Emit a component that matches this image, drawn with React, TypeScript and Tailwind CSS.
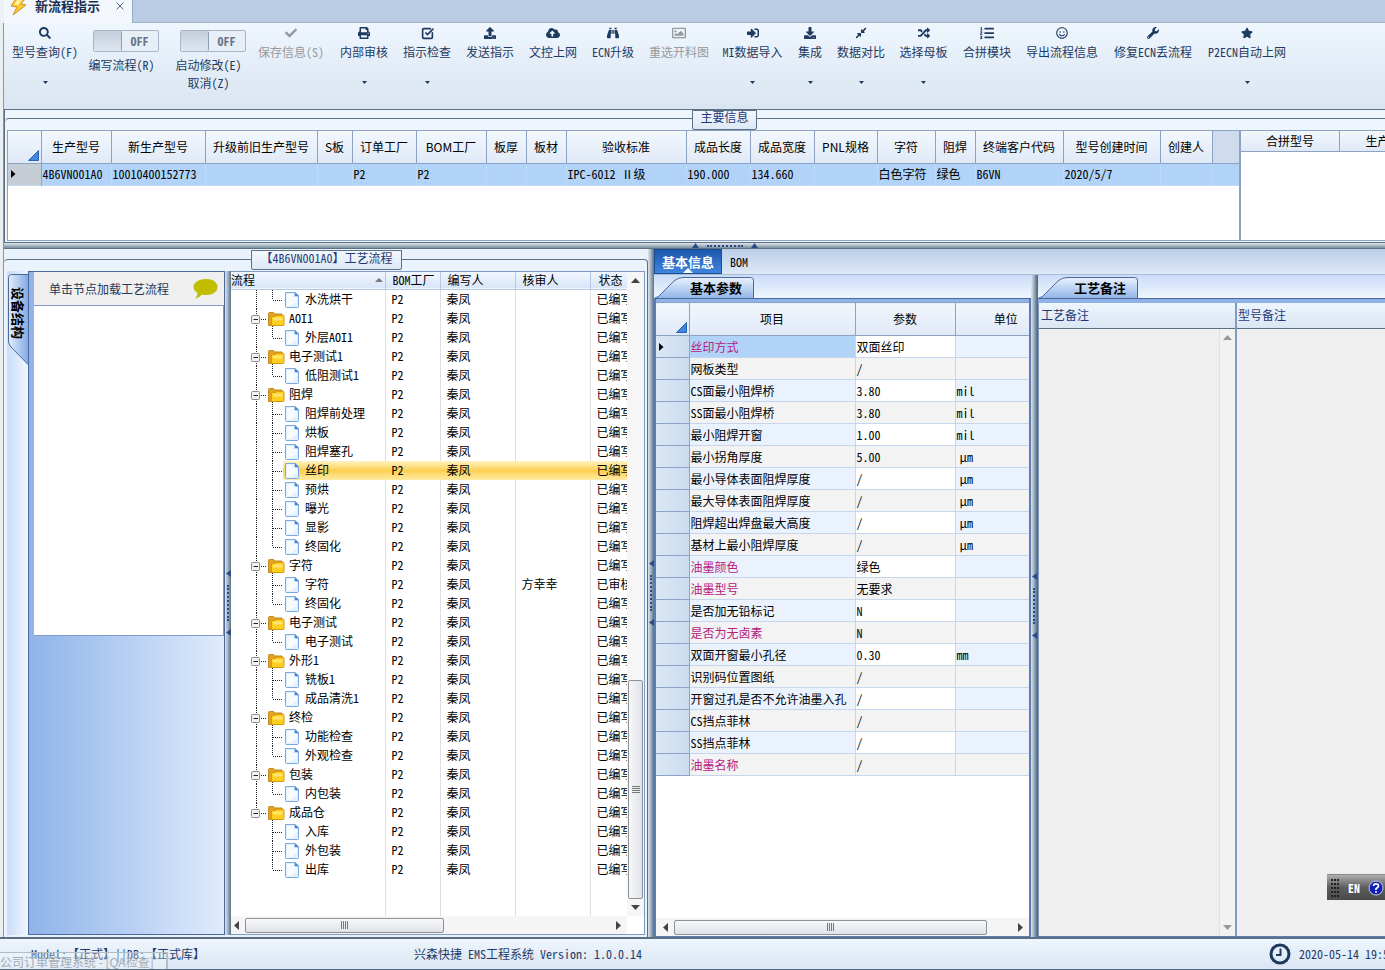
import React from "react";
import {
  FaSearch, FaCheck, FaPrint, FaUpload, FaCloudUploadAlt, FaBinoculars, FaRegImage, FaSignInAlt,
  FaDownload, FaCompressAlt, FaRandom, FaListOl, FaRegSmile, FaWrench, FaStar,
} from "react-icons/fa";
import { SquareCheckBig } from "lucide-react";

type RibbonItem = { label: string; w: string; icon: React.ReactNode; menu?: boolean; disabled?: boolean };

const ribbon: RibbonItem[] = [
  { label: "保存信息(S)", w: "w-[82px]", icon: <FaCheck />, disabled: true },
  { label: "内部审核", w: "w-[64px]", icon: <FaPrint />, menu: true },
  { label: "指示检查", w: "w-[62px]", icon: <SquareCheckBig size={13} strokeWidth={3} />, menu: true },
  { label: "发送指示", w: "w-[64px]", icon: <FaUpload /> },
  { label: "文控上网", w: "w-[62px]", icon: <FaCloudUploadAlt size={14} /> },
  { label: "ECN升级", w: "w-[58px]", icon: <FaBinoculars /> },
  { label: "重选开料图", w: "w-[74px]", icon: <FaRegImage size={14} />, disabled: true },
  { label: "MI数据导入", w: "w-[73px]", icon: <FaSignInAlt />, menu: true },
  { label: "集成", w: "w-[42px]", icon: <FaDownload />, menu: true },
  { label: "数据对比", w: "w-[60px]", icon: <FaCompressAlt size={12} />, menu: true },
  { label: "选择母板", w: "w-[65px]", icon: <FaRandom />, menu: true },
  { label: "合拼模块", w: "w-[62px]", icon: <FaListOl size={14} /> },
  { label: "导出流程信息", w: "w-[88px]", icon: <FaRegSmile /> },
  { label: "修复ECN丢流程", w: "w-[94px]", icon: <FaWrench /> },
  { label: "P2ECN自动上网", w: "w-[94px]", icon: <FaStar />, menu: true },
];

function Caret() {
  return <svg width="5" height="3" className="mt-[21px] fill-[#1f3a5f]"><path d="M0 0h5L2.5 3z" /></svg>;
}

function RibbonButton({ item }: { item: RibbonItem }) {
  return (
    <button type="button" disabled={item.disabled}
      className={`${item.w} flex shrink-0 flex-col items-center whitespace-nowrap pt-[3px] ${item.disabled ? "text-[#98999b]" : "text-[#1f3a5f]"}`}>
      <span className="flex h-[14px] items-center text-[12px]">{item.icon}</span>
      <span className="mt-1 h-4 leading-4">{item.label}</span>
      {item.menu && <Caret />}
    </button>
  );
}

function Switch({ label, extra, w }: { label: string; extra?: string; w: string }) {
  return (
    <div className={`${w} flex shrink-0 flex-col items-center whitespace-nowrap text-[#1f3a5f]`}>
      <button type="button" role="switch" aria-checked="false" aria-label={label}
        className="mt-[7px] ml-2 flex h-[22px] w-[66px] items-stretch rounded-[2px] border border-[#a9b5c6] bg-[#e8eef6]">
        <span className="w-[28px] rounded-[2px] border-r border-[#8f9db2] bg-linear-to-b from-[#c3cddb] to-[#dfe6ef]" />
        <span className="flex-1 text-center text-[12px] leading-5 font-bold text-[#68778b]">OFF</span>
      </button>
      <span className="mt-1 leading-[18px]">{label}</span>
      {extra && <span className="leading-[18px]">{extra}</span>}
    </div>
  );
}

const mainCols: [string, string, string][] = [
  ["生产型号", "4B6VN001A0", "w-[70px]"],
  ["新生产型号", "10010400152773", "w-[94px]"],
  ["升级前旧生产型号", "", "w-[112px]"],
  ["S板", "", "w-[35px]"],
  ["订单工厂", "P2", "w-[64px]"],
  ["BOM工厂", "P2", "w-[70px]"],
  ["板厚", "", "w-[40px]"],
  ["板材", "", "w-[40px]"],
  ["验收标准", "IPC-6012 Ⅱ级", "w-[120px]"],
  ["成品长度", "190.000", "w-[64px]"],
  ["成品宽度", "134.660", "w-[64px]"],
  ["PNL规格", "", "w-[63px]"],
  ["字符", "白色字符", "w-[58px]"],
  ["阻焊", "绿色", "w-[40px]"],
  ["终端客户代码", "B6VN", "w-[88px]"],
  ["型号创建时间", "2020/5/7", "w-[97px]"],
  ["创建人", "", "w-[52px]"],
];

type Node = { t: string; folder?: boolean; last?: boolean; reviewer?: string; sel?: boolean };
const nodes: Node[] = [
  { t: "水洗烘干", last: true },
  { t: "AOI1", folder: true }, { t: "外层AOI1", last: true },
  { t: "电子测试1", folder: true }, { t: "低阻测试1", last: true },
  { t: "阻焊", folder: true }, { t: "阻焊前处理" }, { t: "烘板" }, { t: "阻焊塞孔" }, { t: "丝印", sel: true },
  { t: "预烘" }, { t: "曝光" }, { t: "显影" }, { t: "终固化", last: true },
  { t: "字符", folder: true }, { t: "字符", reviewer: "方幸幸" }, { t: "终固化", last: true },
  { t: "电子测试", folder: true }, { t: "电子测试", last: true },
  { t: "外形1", folder: true }, { t: "铣板1" }, { t: "成品清洗1", last: true },
  { t: "终检", folder: true }, { t: "功能检查" }, { t: "外观检查", last: true },
  { t: "包装", folder: true }, { t: "内包装", last: true },
  { t: "成品仓", folder: true }, { t: "入库" }, { t: "外包装" }, { t: "出库", last: true },
];
const lastRoot = 27;

const dots = { stroke: "#222", strokeDasharray: "1 1", fill: "none" };

function FolderRow({ end }: { end: boolean }) {
  return (
    <svg width="54" height="19" className="shrink-0">
      <path d={end ? "M25.5 0V9" : "M25.5 0V19"} {...dots} />
      <path d="M30 10.5H35" {...dots} />
      <path d="M41.5 17V19" {...dots} />
      <rect x="20.5" y="6.5" width="8" height="8" rx="1" fill="#f2f2f2" stroke="#8b8b8b" />
      <path d="M22.5 10.5h4.500" stroke="#222" />
      <path d="M37.500 16.500V4.500q0-1 1-1h4l1 1.500h7.500v11.500z" fill="#e0a422" stroke="#c48a1c" />
      <path d="M40.500 16.500V8.500q0-1 1-1h3l1-1.200h6.500q1 0 1 1v8.200q0 1-1 1z" fill="#ffcf1f" stroke="#d99a10" />
      <path d="M42 8.500h9.500v3H42z" fill="#ffe98a" opacity=".8" />
    </svg>
  );
}

function LeafLines({ root, last }: { root: boolean; last: boolean }) {
  return (
    <svg width="52" height="19" className="shrink-0">
      {root && <path d="M25.5 0V19" {...dots} />}
      <path d={last ? "M41.5 0V10" : "M41.5 0V19"} {...dots} />
      <path d="M42 10.5H51" {...dots} />
    </svg>
  );
}

function DocIcon() {
  return (
    <svg width="16" height="19" className="shrink-0">
      <path d="M2.500 2.500H12L15.500 6V16.500q0 1-1 1H3.500q-1 0-1-1z" fill="#e4f1ff" stroke="#7ba9e4" />
      <path d="M4 4h6v3h4v4L8 16H4z" fill="#f6fbff" />
      <path d="M12 2.500V6H15.500z" fill="#3f82d6" stroke="#3f82d6" strokeWidth=".5" />
    </svg>
  );
}

const params: [string, string, string, boolean?][] = [
  ["丝印方式", "双面丝印", "", true], ["网板类型", "/", ""], ["CS面最小阻焊桥", "3.80", "mil"], ["SS面最小阻焊桥", "3.80", "mil"],
  ["最小阻焊开窗", "1.00", "mil"], ["最小拐角厚度", "5.00", "μm"], ["最小导体表面阻焊厚度", "/", "μm"],
  ["最大导体表面阻焊厚度", "/", "μm"], ["阻焊超出焊盘最大高度", "/", "μm"], ["基材上最小阻焊厚度", "/", "μm"],
  ["油墨颜色", "绿色", "", true], ["油墨型号", "无要求", "", true], ["是否加无铅标记", "N", ""], ["是否为无卤素", "N", "", true],
  ["双面开窗最小孔径", "0.30", "mm"], ["识别码位置图纸", "/", ""], ["开窗过孔是否不允许油墨入孔", "/", ""],
  ["CS挡点菲林", "/", ""], ["SS挡点菲林", "/", ""], ["油墨名称", "/", "", true],
];

function Corner() {
  return <svg width="11" height="11" className="mr-[2px] mb-[2px] ml-auto"><path d="M10.500 .5V10.500H.5z" fill="#3f86e0" stroke="#2a62b4" /></svg>;
}
function Pointer() {
  return <svg width="5" height="8" className="ml-[3px]"><path d="M0 0L4.500 4 0 8z" /></svg>;
}

function Arrow({ dir, pale }: { dir: "up" | "down" | "left" | "right"; pale?: boolean }) {
  const d = { up: "M4 11L8.500 6 13 11z", down: "M4 6H13L8.500 11z", left: "M11 4V13L6 8.500z", right: "M6 4L11 8.500 6 13z" }[dir];
  return (
    <button type="button" aria-label={dir} className="shrink-0">
      <svg width="17" height="17" className={pale ? "fill-[#999]" : "fill-[#444]"}><path d={d} /></svg>
    </button>
  );
}

function HScroll({ thumb, rest }: { thumb: string; rest: string }) {
  return (
    <div className="flex h-[18px] shrink-0 items-center bg-[#f5f5f5]">
      <span className="-ml-[3px] flex"><Arrow dir="left" /></span>
      <div className={`${thumb} flex h-[15px] items-center justify-center gap-[1px] rounded-[2px] border border-[#8d9299] bg-linear-to-b from-[#f7f8f9] to-[#dfe2e8]`}>
        {[0, 1, 2, 3].map((i) => <span key={i} className="h-2 w-px bg-[#777]" />)}
      </div>
      <div className={rest} />
      <Arrow dir="right" />
    </div>
  );
}

function VSplit() {
  return (
    <div className="flex w-[6px] shrink-0 flex-col items-center justify-center gap-2 bg-linear-to-r from-[#dfe6ed] via-[#9fb0c0] to-[#5d7183]">
      <svg width="5" height="7" className="fill-[#2d4a86]"><path d="M5 0V7L0 3.500z" /></svg>
      <span className="h-[36px] w-[3px] border-l-2 border-dotted border-[#2d4a86]" />
      <svg width="5" height="7" className="fill-[#2d4a86]"><path d="M5 0V7L0 3.500z" /></svg>
    </div>
  );
}

function SlantTab({ label }: { label: string }) {
  return (
    <div role="tab" aria-selected="true" className="relative h-[22px] w-[100px] shrink-0 pl-[36px] text-[13px] leading-[24px] font-bold text-black">
      <svg width="100" height="22" className="absolute inset-0">
        <defs>
          <linearGradient id="tabFill" x1="0" y1="0" x2="0" y2="1">
            <stop offset="0" stopColor="#eaf2fd" /><stop offset="1" stopColor="#93b6e8" />
          </linearGradient>
        </defs>
        <path d="M1 22Q5 21 8 17L20 5Q24 1.500 29 1.500H96.500Q99.500 1.500 99.500 4.500V22" fill="url(#tabFill)" stroke="#49689b" />
      </svg>
      <span className="relative">{label}</span>
    </div>
  );
}

const headCell = "border-r border-[#8ca3c4] bg-linear-to-b from-[#f2f7fd] to-[#dfe9f6] font-normal";
const sans = "font-['Noto_Sans_CJK_SC',sans-serif]";

export default function App() {
  return (
    <div className="flex h-screen overflow-hidden bg-[#f0f0f0] font-['Noto_Sans_Mono_CJK_SC','Liberation_Mono','Noto_Sans_CJK_SC',monospace] text-[12px] text-black">
      <div className="flex min-w-0 flex-1 flex-col">
        <header className="flex h-[23px] shrink-0 bg-[#b9cce4]">
          <div className="w-1 shrink-0 bg-[#eef2f6]" />
          <div className="flex w-[129px] items-center overflow-hidden border-r border-[#93a9c6] bg-[#f4f8fd] pb-3">
            <svg width="18" height="19" viewBox="0 0 18 19" className="ml-[6px] shrink-0">
              <path d="M7 1L15 3 11 8 16 9 3 19 7 11 1 10z" fill="#ffc928" stroke="#c99030" />
              <path d="M8 3L12 4 8 9 4 9z" fill="#fff2a8" />
            </svg>
            <span className="ml-[7px] text-[13px] font-bold whitespace-nowrap text-[#1b2f52]">新流程指示</span>
            <button type="button" aria-label="关闭" className="ml-auto pr-2">
              <svg width="8" height="8" className="stroke-[#5b6f8c]"><path d="M.5 .5L7.500 7.500M7.500 .5L.5 7.500" /></svg>
            </button>
          </div>
          <div className="flex-1 border-b border-[#9fb3cd]" />
        </header>

        <div className="flex min-h-0 flex-1">
          <div className="w-1 shrink-0 border-r border-[#8795a5] bg-[#eceff2]" />
          <div className="flex min-w-0 flex-1 flex-col">
            <nav className="flex h-[86px] shrink-0 items-start overflow-hidden bg-linear-to-b from-[#eff6fe] to-[#d9e5f1]">
              <RibbonButton item={{ label: "型号查询(F)", w: "w-[82px]", icon: <FaSearch />, menu: true }} />
              <Switch label="编写流程(R)" w="w-[71px]" />
              <Switch label="启动修改(E)" extra="取消(Z)" w="ml-[10px] w-[83px]" />
              {ribbon.map((it) => <RibbonButton key={it.label} item={it} />)}
            </nav>

            <section className="flex h-[134px] shrink-0 flex-col border-t border-l border-[#5b7083] bg-[#eef5fd] pt-2">
              <div className="relative flex min-h-0 flex-1 rounded-tl-[4px] border-t border-[#5b7083] pt-[11px] pl-[2px]">
                <h2 className="absolute -top-[9px] left-[687px] h-5 w-[65px] rounded-b-[2px] border border-[#5b7083] bg-linear-to-b from-[#f2f7fd] to-[#dce8f5] text-center leading-3 text-[#1f3a78]">主要信息</h2>
                <div className="w-[1233px] shrink-0 overflow-hidden border border-[#8ca3c4] bg-white">
                  <table className="w-full table-fixed border-collapse">
                    <thead>
                      <tr className={`h-8 border-b border-[#8ca3c4] ${sans}`}>
                        <th className={`w-[33px] align-bottom ${headCell}`}><Corner /></th>
                        {mainCols.map(([h, , w]) => <th key={h} className={`${w} p-0 whitespace-nowrap ${headCell}`}>{h}</th>)}
                        <th className="bg-[#cfdcee]" />
                      </tr>
                    </thead>
                    <tbody>
                      <tr className="h-[22px] border-b border-[#c5dcf5] bg-[#b0d3f7]">
                        <td className="border-r border-[#8ca3c4] bg-[#c7cdd4] p-0"><Pointer /></td>
                        {mainCols.map(([h, v]) => <td key={h} className="overflow-hidden border-r border-[#bcdaf8] p-0 pl-px whitespace-nowrap">{v}</td>)}
                        <td />
                      </tr>
                    </tbody>
                  </table>
                </div>
                <div className="min-w-0 flex-1 overflow-hidden border-y border-l border-[#8ca3c4] bg-white">
                  <div className={`flex h-[21px] w-[240px] border-b border-[#8ca3c4] text-center leading-5 ${sans}`}>
                    <div className={`w-[99px] shrink-0 ${headCell}`}>合拼型号</div>
                    <div className={`w-[100px] shrink-0 ${headCell}`}>生产型号</div>
                    <div className={`flex-1 ${headCell}`} />
                  </div>
                </div>
              </div>
              <div className="h-[2px] shrink-0 border-b border-[#5b7083]" />
            </section>
            <div className="flex h-[6px] shrink-0 items-center gap-2 border-b border-[#5b7083] bg-linear-to-b from-[#dfe7ee] to-[#7c8fa0] pl-[688px]">
              <svg width="7" height="5" className="fill-[#2d4a86]"><path d="M0 5L3.500 0 7 5z" /></svg>
              <span className="w-[36px] border-t-2 border-dotted border-[#2d4a86]" />
              <svg width="7" height="5" className="fill-[#2d4a86]"><path d="M0 5L3.500 0 7 5z" /></svg>
            </div>

            <main className="flex min-h-0 flex-1">
              <section className="flex w-[644px] shrink-0 flex-col bg-[#eaf2fc] pt-[10px]">
                <div className="relative flex min-h-0 flex-1 rounded-t-[4px] border-t border-r border-[#5b7083] pt-[11px] pr-[2px] pb-[2px] pl-[3px]">
                  <h2 className="absolute -top-[10px] left-[247px] h-5 w-[151px] rounded-b-[2px] border border-[#5b7083] bg-linear-to-b from-[#f2f7fd] to-[#dce8f5] text-center leading-[14px] whitespace-nowrap text-[#1f3a78]">【4B6VN001A0】工艺流程</h2>
                  <div className="w-[21px] shrink-0 bg-linear-to-r from-[#c9dcf8] to-[#f1f6fe]">
                    <div role="tab" aria-selected="true" className="relative flex h-[94px] w-[21px] items-start justify-center pt-4">
                      <svg width="21" height="94" className="absolute inset-0">
                        <defs><linearGradient id="sideFill"><stop offset="0" stopColor="#e3eefc" /><stop offset="1" stopColor="#84aae3" /></linearGradient></defs>
                        <path d="M21 3.500H4.500Q1.500 3.500 1.500 6.500V70Q1.500 73 4 76L21 93.500" fill="url(#sideFill)" stroke="#49689b" />
                      </svg>
                      <span className="relative text-[13px] leading-5 font-bold whitespace-nowrap [text-orientation:sideways] [writing-mode:vertical-rl]">设备结构</span>
                    </div>
                  </div>
                  <div className="w-[197px] shrink-0 border border-[#49689b] bg-linear-to-r from-[#8fb3e9] to-[#dfebfd] pl-[5px]">
                    <div className="flex h-[34px] items-center border-b border-[#7f9bc4] bg-[#efefef] pl-[15px] text-[#24395c]">
                      单击节点加载工艺流程
                      <svg width="25" height="22" viewBox="0 0 25 22" className="mr-[6px] ml-auto fill-[#c3bd00]">
                        <path d="M13 1C20 1 24.500 4.500 24.500 9S20 17 13 17Q10.500 17 9 16.500 6 20 2 20.500 4.500 18 4.500 15 .5 12.500 .5 9C.5 4.500 6 1 13 1z" />
                      </svg>
                    </div>
                    <div className="h-[330px] border-r border-b border-[#7f9bc4] bg-white" />
                  </div>
                  <VSplit />
                  <div className="flex min-w-0 flex-1 flex-col border border-l-0 border-[#7f9bc4] bg-white">
                    <div className="flex min-h-0 flex-1">
                      <div className="relative flex min-w-0 flex-1 flex-col overflow-hidden">
                        <table className="w-[429px] table-fixed border-collapse">
                          <thead>
                            <tr className="h-[17px] border-b border-[#b5c9e4] bg-linear-to-b from-[#f0f6fe] to-[#d9e6f7] text-left whitespace-nowrap">
                              <th className="w-[154px] border-r border-[#b5c9e4] p-0 font-normal leading-4">
                                <span className="flex items-center justify-between pr-[2px]">流程<svg width="8" height="4" className="fill-[#777]"><path d="M0 4L4 0 8 4z" /></svg></span>
                              </th>
                              <th className="w-[55px] border-r border-[#b5c9e4] p-0 pl-[7px] font-normal leading-4">BOM工厂</th>
                              <th className="w-[75px] border-r border-[#b5c9e4] p-0 pl-[7px] font-normal leading-4">编写人</th>
                              <th className="w-[75px] border-r border-[#b5c9e4] p-0 pl-[7px] font-normal leading-4">核审人</th>
                              <th className="p-0 pl-[8px] font-normal leading-4">状态</th>
                            </tr>
                          </thead>
                          <tbody>
                            {nodes.map((n, i) => {
                              const hl = n.sel ? "bg-linear-to-b from-[#fff3c0] via-[#fbd04e] to-[#ffeaa0]" : "";
                              const td = `border-r p-0 pl-[6px] ${n.sel ? `border-transparent ${hl}` : "border-[#dcdfe3]"}`;
                              return (
                                <tr key={i} className="h-[19px] whitespace-nowrap">
                                  <td className={`border-r p-0 ${n.sel ? "border-transparent" : "border-[#dcdfe3]"}`}>
                                    <div className="flex h-[19px] items-center">
                                      {n.folder ? <FolderRow end={i === lastRoot} /> : <LeafLines root={i < lastRoot} last={!!n.last} />}
                                      <div className={`flex h-[19px] flex-1 items-center ${hl}`}>
                                        {!n.folder && <DocIcon />}
                                        <span className={n.folder ? "pl-1 leading-4" : "pl-[6px] leading-4"}>{n.t}</span>
                                      </div>
                                    </div>
                                  </td>
                                  <td className={td}>P2</td>
                                  <td className={td}>秦凤</td>
                                  <td className={td}>{n.reviewer}</td>
                                  <td className={`p-0 pl-[6px] ${hl}`}>{n.reviewer ? "已审核" : "已编写"}</td>
                                </tr>
                              );
                            })}
                          </tbody>
                        </table>
                        <div className="flex flex-1">
                          <div className="w-[155px] border-r border-[#dcdfe3]" />
                          <div className="w-[55px] border-r border-[#dcdfe3]" />
                          <div className="w-[75px] border-r border-[#dcdfe3]" />
                          <div className="w-[75px] border-r border-[#dcdfe3]" />
                        </div>
                      </div>
                      <div className="flex w-[17px] shrink-0 flex-col items-center bg-[#f6f6f6]">
                        <Arrow dir="up" />
                        <div className="flex-[391]" />
                        <div className="flex w-[15px] flex-[217] flex-col items-center justify-center gap-[1px] rounded-[2px] border border-[#8d9299] bg-linear-to-r from-[#f7f8f9] to-[#dfe2e8]">
                          {[0, 1, 2, 3].map((i) => <span key={i} className="h-px w-2 bg-[#777]" />)}
                        </div>
                        <Arrow dir="down" />
                      </div>
                    </div>
                    <div className="pr-[17px]"><HScroll thumb="flex-[198]" rest="flex-[167]" /></div>
                  </div>
                </div>
              </section>
              <VSplit />

              <section className="flex min-w-0 flex-1 flex-col">
                <div role="tablist" className="flex h-[26px] shrink-0 border-b border-[#a9bdd8] bg-linear-to-b from-[#bccee8] to-[#dde9f6]">
                  <button type="button" role="tab" aria-selected="true" className="relative w-[68px] border border-[#1c4c93] bg-linear-to-b from-[#1d58ad] to-[#3f86dc] text-[13px] leading-[22px] font-bold whitespace-nowrap text-white">
                    基本信息
                    <svg width="10" height="5" className="absolute bottom-0 left-[28px] fill-white"><path d="M0 5L5 0 10 5z" /></svg>
                  </button>
                  <button type="button" role="tab" aria-selected="false" className="ml-2 leading-6">BOM</button>
                </div>
                <div className="flex min-h-0 flex-1">
                  <div className="flex w-[377px] shrink-0 flex-col">
                    <div className="flex h-6 shrink-0 items-end border-b border-[#49689b] bg-linear-to-b from-[#cadcf8] to-[#f0f6fe]"><SlantTab label="基本参数" /></div>
                    <div className="flex min-h-0 flex-1 flex-col border-r-2 border-b border-l-2 border-[#5a7db2]">
                      <div className="h-[3px] shrink-0 bg-[#8fb3e9]" />
                      <div className="min-h-0 flex-1 overflow-hidden bg-white">
                        <table className="w-full table-fixed border-collapse whitespace-nowrap">
                          <thead>
                            <tr className={`h-[33px] border-y border-[#8ca3c4] ${sans}`}>
                              <th className={`w-[33px] p-0 align-bottom ${headCell}`}><Corner /></th>
                              <th className={`w-[166px] p-0 ${headCell}`}>项目</th>
                              <th className={`w-[100px] p-0 ${headCell}`}>参数</th>
                              <th className="bg-linear-to-b from-[#f2f7fd] to-[#dfe9f6] p-0 pl-[27px] font-normal">单位</th>
                            </tr>
                          </thead>
                          <tbody>
                            {params.map(([name, val, unit, key], i) => {
                              const even = i % 2 === 0;
                              return (
                                <tr key={name} className={`h-[22px] border-b border-[#c5d6ee] ${even ? "bg-[#e9f2fd]" : "bg-[#f3f3f3]"}`}>
                                  <td className="border-r border-b border-[#8ca3c4] bg-linear-to-r from-[#dae7f5] to-[#cbdcee] p-0">{i === 0 && <Pointer />}</td>
                                  <td className={`border-r border-[#c5d6ee] p-0 pl-px ${key ? "text-[#b5207f]" : ""} ${i === 0 ? "bg-[#b0d3f7]" : ""}`}>{name}</td>
                                  <td className={`border-r border-[#c5d6ee] p-0 pl-px ${even ? "bg-white" : ""}`}>{val}</td>
                                  <td className={unit === "μm" ? "p-0 pl-1" : "p-0 pl-px"}>{unit}</td>
                                </tr>
                              );
                            })}
                          </tbody>
                        </table>
                      </div>
                      <div className="bg-[#f5f5f5] pl-1"><HScroll thumb="flex-[311]" rest="flex-[25]" /></div>
                    </div>
                  </div>
                  <VSplit />
                  <div className="flex min-w-0 flex-1 flex-col border-l border-[#49689b]">
                    <div className="flex h-6 shrink-0 items-end border-b border-[#49689b] bg-linear-to-b from-[#cadcf8] to-[#f0f6fe]"><SlantTab label="工艺备注" /></div>
                    <div className="h-1 shrink-0 bg-[#8fb3e9]" />
                    <div className="flex min-h-0 flex-1 border-b border-[#5a7db2] bg-[#efefef]">
                      <div className="flex w-[199px] shrink-0 flex-col border-r-2 border-l border-[#7f9bc4]">
                        <label htmlFor="craft" className="h-[26px] shrink-0 border-b border-[#5b7083] bg-linear-to-b from-[#eef5fd] to-[#dae6f3] pl-[2px] leading-6 text-[#1f3a78]">工艺备注</label>
                        <div className="flex min-h-0 flex-1">
                          <textarea id="craft" readOnly className="min-w-0 flex-1 resize-none outline-none" />
                          <div className="flex w-[16px] flex-col items-center justify-between border-l border-[#e0e0e0] bg-[#f2f2f2]">
                            <Arrow dir="up" pale /><Arrow dir="down" pale />
                          </div>
                        </div>
                      </div>
                      <div className="flex min-w-0 flex-1 flex-col">
                        <label htmlFor="model" className="h-[26px] shrink-0 border-b border-[#5b7083] bg-linear-to-b from-[#eef5fd] to-[#dae6f3] pl-px leading-6 text-[#1f3a78]">型号备注</label>
                        <textarea id="model" readOnly className="min-h-0 flex-1 resize-none outline-none" />
                      </div>
                    </div>
                  </div>
                </div>
              </section>
            </main>
          </div>
        </div>

        <footer className="relative flex h-[33px] shrink-0 items-center overflow-hidden border-t-2 border-b border-[#5b7083] bg-linear-to-b from-[#eef5fd] to-[#dae6f3] whitespace-nowrap text-[#1f3a66]">
          <span className="w-[414px] shrink-0 pl-[31px]">Model:【正式】||DB:【正式库】</span>
          <span>兴森快捷 EMS工程系统 Version: 1.0.0.14</span>
          <span className="-mr-[10px] ml-auto flex items-center gap-2">
            <svg width="22" height="22" fill="none" stroke="#1f3a5f"><circle cx="11" cy="11" r="9" strokeWidth="3" /><path d="M11.500 5.500V12H7" strokeWidth="2" /></svg>
            2020-05-14 19:56
          </span>
          <div className="absolute -bottom-px left-0 h-[18px] w-[168px] border-t border-r-2 border-[#b4bcc6] bg-[#ffffff44] leading-[18px] text-[#a3abb6] font-['Noto_Sans_CJK_SC',sans-serif]">公司订单管理系统 - [QA检查]</div>
        </footer>
      </div>

      <div className="fixed right-0 bottom-[70px] flex h-[26px] w-[58px] items-center overflow-hidden border-t border-[#888] bg-linear-to-b from-[#b0b0b0] via-[#5d5d5d] to-[#484a4b] pl-1 text-white">
        <svg width="9" height="18" className="fill-[#222]">
          {[0, 1, 2, 3, 4].map((r) => [0, 1, 2].map((c) => <rect key={`${r}-${c}`} x={c * 3} y={r * 4} width="2" height="2" />))}
        </svg>
        <span className="ml-2 font-bold">EN</span>
        <svg width="16" height="16" viewBox="0 0 16 16" className="ml-2 shrink-0">
          <circle cx="8" cy="8" r="7" fill="#1220b8" stroke="#c5cbe8" />
          <path d="M5.500 6Q5.500 3.800 8 3.800T10.500 6Q10.500 7.200 8 8.700V10M8 11V12.800" fill="none" stroke="#fff" strokeWidth="1.700" />
        </svg>
      </div>
    </div>
  );
}
